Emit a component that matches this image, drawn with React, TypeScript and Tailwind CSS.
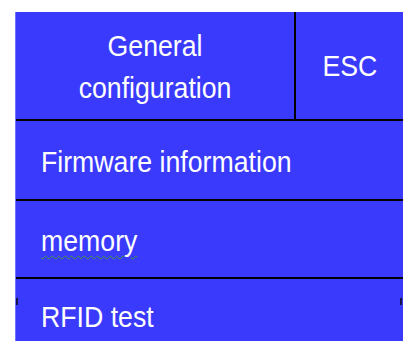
import React from 'react';

const font = { fontFamily: '"Liberation Sans", Arial, sans-serif' };

const MenuRow: React.FC<{ label: string; className?: string; textClass?: string }> = ({ label, className = '', textClass = '' }) => (
  <div className={`flex items-start pl-[25px] border-b-2 border-black ${className}`}>
    <span className={`block origin-left scale-x-[0.92] text-[29px] leading-[33px] text-white whitespace-nowrap ${textClass}`}>
      {label}
    </span>
  </div>
);

export default function App() {
  return (
    <div className="w-[403px] h-[341px] bg-white overflow-hidden pt-[12px] pl-[15px]" style={font}>
      <div className="relative w-[388px] h-[329px] bg-[#3a3afd] border-l border-[#7272ff] flex flex-col">
        {/* Header */}
        <div className="flex h-[109px] border-b-2 border-black">
          <div className="w-[280px] border-r-2 border-black flex justify-center pt-[13px]">
            <div className="origin-center scale-x-[0.92] text-[29px] leading-[42px] text-white text-center">
              General
              <br />
              configuration
            </div>
          </div>
          <div className="flex-1 flex justify-center pt-[38px]">
            <span className="block scale-x-[0.92] text-[29px] leading-[33px] text-white">ESC</span>
          </div>
        </div>

        <MenuRow label="Firmware information" className="h-[80px] pt-[25px]" />
        <MenuRow
          label="memory"
          className="h-[78px] pt-[24px]"
          textClass="underline decoration-wavy decoration-[#3f9a3f] decoration-1 underline-offset-[4px]"
        />
        <div className="flex-1 flex items-start pl-[25px] pt-[22px]">
          <span className="block origin-left scale-x-[0.92] text-[29px] leading-[33px] text-white whitespace-nowrap">
            RFID test
          </span>
        </div>

        {/* small edge ticks */}
        <span className="absolute left-0 top-[286px] w-[2px] h-[7px] bg-[#14144a]" />
        <span className="absolute right-[1px] top-[286px] w-[2px] h-[7px] bg-[#14144a]" />
      </div>
    </div>
  );
}
